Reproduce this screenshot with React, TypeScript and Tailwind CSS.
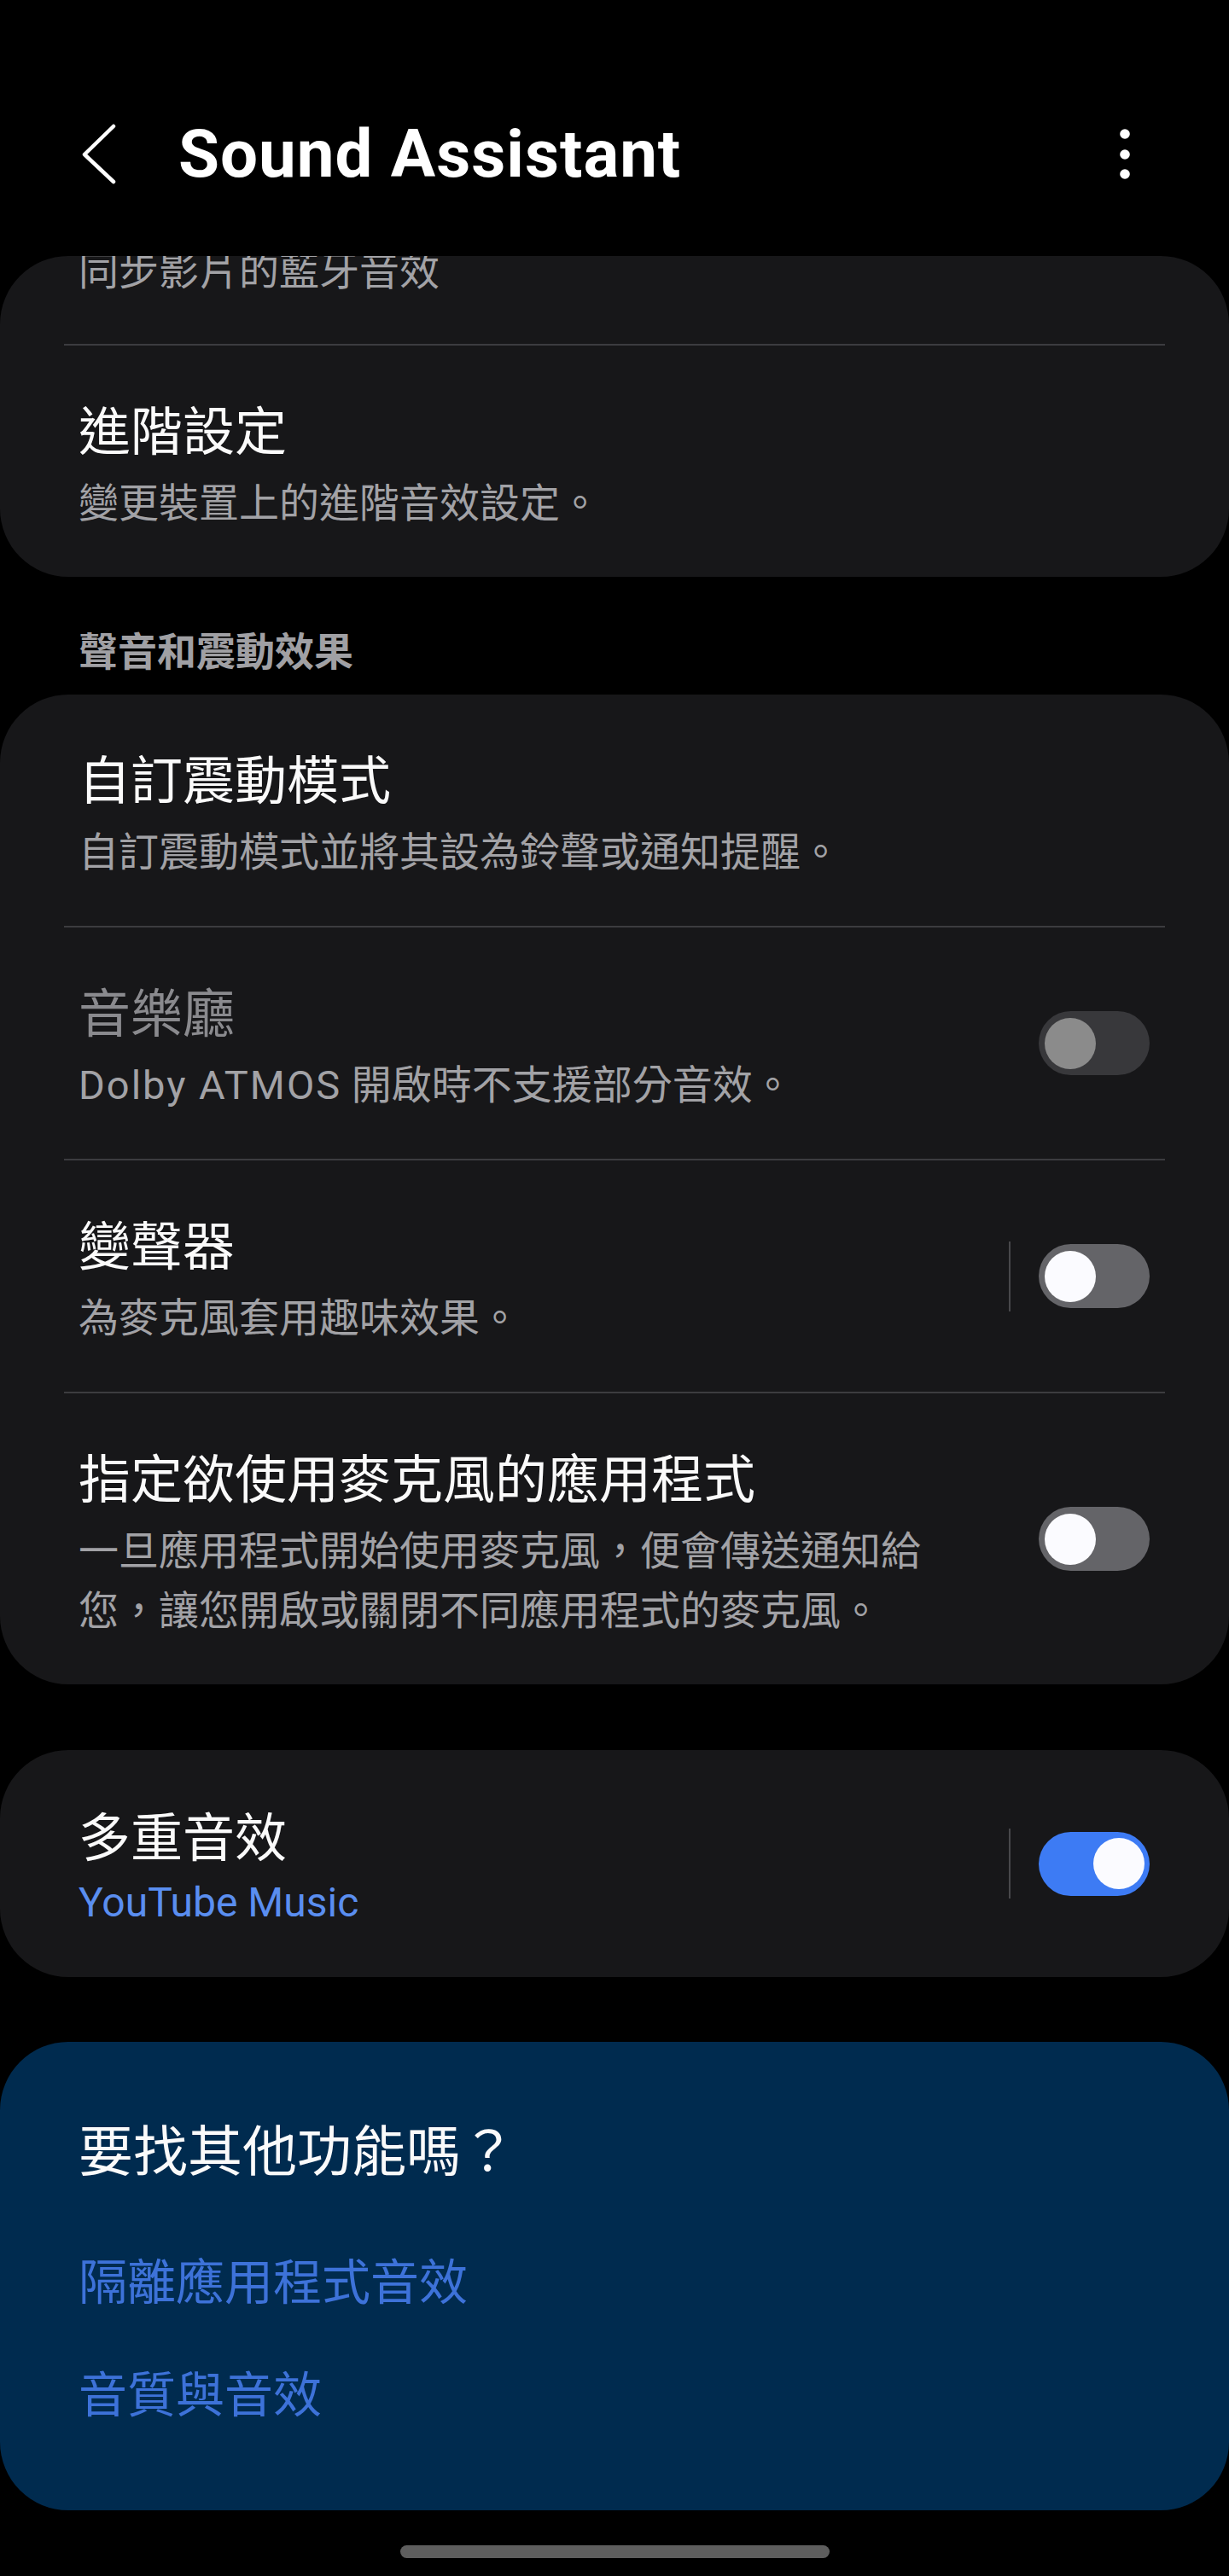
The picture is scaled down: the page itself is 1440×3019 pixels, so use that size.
import React from "react";

const FONT = { fontFamily: 'Roboto, "Noto Sans CJK TC", "Noto Sans", sans-serif' };

function Toggle({ state }: { state: "on" | "off" | "disabled" }) {
  if (state === "on") {
    return (
      <div className="w-[130px] h-[75px] rounded-full bg-[#3d7bf4] flex items-center justify-end pr-[6px] shrink-0">
        <div className="w-[60px] h-[60px] rounded-full bg-[#fbfbff]" />
      </div>
    );
  }
  if (state === "disabled") {
    return (
      <div className="w-[130px] h-[75px] rounded-full bg-[#38383b] flex items-center pl-[7px] shrink-0">
        <div className="w-[60px] h-[60px] rounded-full bg-[#8b8b8b]" />
      </div>
    );
  }
  return (
    <div className="w-[130px] h-[75px] rounded-full bg-[#646468] flex items-center pl-[7px] shrink-0">
      <div className="w-[60px] h-[60px] rounded-full bg-[#fbfbff]" />
    </div>
  );
}

function Divider() {
  return <div className="mx-[75px] h-[2px] bg-[#3c3c3f]" />;
}

function VLine() {
  return <div className="w-[2px] h-[82px] bg-[#48484b] mr-[33px] shrink-0" />;
}

function Row({
  title,
  sub,
  toggle,
  vline,
  disabled,
}: {
  title: string;
  sub: React.ReactNode;
  toggle?: "on" | "off" | "disabled";
  vline?: boolean;
  disabled?: boolean;
}) {
  return (
    <div className="flex items-center pl-[92px] pr-[93px]">
      <div className="w-[1000px] pt-[62px] pb-[51px]">
        <div
          className={
            "text-[61px] leading-[80px] " + (disabled ? "text-[#8a8a8e]" : "text-[#fafafa]")
          }
        >
          {title}
        </div>
        <div className="mt-[8px] text-[47px] leading-[70px] text-[#a2a2a6]">{sub}</div>
      </div>
      <div className="flex-1" />
      {vline && <VLine />}
      {toggle && <Toggle state={toggle} />}
    </div>
  );
}

export default function App() {
  return (
    <div className="w-[1440px] min-h-[3019px] bg-black flex flex-col" style={FONT}>
      {/* Header */}
      <div className="h-[300px] pt-[126px]">
        <div className="h-[110px] flex items-center pl-[95px] pr-[110px]">
          <svg width="44" height="72" viewBox="0 0 44 72" className="shrink-0">
            <polyline
              points="38,3 4,36 38,68"
              fill="none"
              stroke="#ffffff"
              strokeWidth="4.5"
              strokeLinecap="round"
              strokeLinejoin="round"
            />
          </svg>
          <div className="ml-[70px] text-[78px] font-bold leading-none text-white tracking-[1px]">
            Sound Assistant
          </div>
          <div className="flex-1" />
          <svg width="24" height="72" viewBox="0 0 24 72" className="shrink-0">
            <circle cx="12" cy="12" r="5.8" fill="#ffffff" />
            <circle cx="12" cy="36" r="5.8" fill="#ffffff" />
            <circle cx="12" cy="59" r="5.8" fill="#ffffff" />
          </svg>
        </div>
      </div>

      {/* Card 1 */}
      <div className="bg-[#171719] rounded-[80px] overflow-hidden">
        <div className="px-[92px] -mt-[17px] pb-[50px] text-[47px] leading-[70px] text-[#a2a2a6]">
          同步影片的藍牙音效
        </div>
        <Divider />
        <Row title="進階設定" sub="變更裝置上的進階音效設定。" />
      </div>

      {/* Section header */}
      <div className="h-[138px] pt-[60px] px-[92px]">
        <div className="text-[46px] leading-[56px] font-bold text-[#a0a0a4]">聲音和震動效果</div>
      </div>

      {/* Card 2 */}
      <div className="bg-[#171719] rounded-[80px] overflow-hidden">
        <Row title="自訂震動模式" sub="自訂震動模式並將其設為鈴聲或通知提醒。" />
        <Divider />
        <Row
          title="音樂廳"
          sub={
            <>
              <span className="tracking-[2px]">Dolby ATMOS</span> 開啟時不支援部分音效。
            </>
          }
          toggle="disabled"
          disabled
        />
        <Divider />
        <Row title="變聲器" sub="為麥克風套用趣味效果。" toggle="off" vline />
        <Divider />
        <Row
          title="指定欲使用麥克風的應用程式"
          sub="一旦應用程式開始使用麥克風，便會傳送通知給您，讓您開啟或關閉不同應用程式的麥克風。"
          toggle="off"
        />
      </div>

      {/* Card 3 */}
      <div className="mt-[77px] bg-[#171719] rounded-[80px] overflow-hidden">
        <div className="flex items-center pl-[92px] pr-[93px]">
          <div className="w-[1000px] pt-[64px] pb-[52px]">
            <div className="text-[61px] leading-[80px] text-[#fafafa]">多重音效</div>
            <div className="text-[48px] leading-[70px] text-[#5a8ef0]">YouTube Music</div>
          </div>
          <div className="flex-1" />
          <VLine />
          <Toggle state="on" />
        </div>
      </div>

      {/* Card 4 */}
      <div className="mt-[76px] bg-[#002b4f] rounded-[80px] px-[92px] pt-[90px] pb-[94px]">
        <div className="text-[64px] leading-[80px] text-[#fafafa]">要找其他功能嗎？</div>
        <div className="mt-[73px] text-[57px] leading-[80px] text-[#3d72d9]">隔離應用程式音效</div>
        <div className="mt-[52px] text-[57px] leading-[80px] text-[#3d72d9]">音質與音效</div>
      </div>

      {/* Home indicator */}
      <div className="flex justify-center pt-[41px] pb-[21px]">
        <div className="w-[503px] h-[15px] rounded-full bg-[#5e5e5e]" />
      </div>
    </div>
  );
}
